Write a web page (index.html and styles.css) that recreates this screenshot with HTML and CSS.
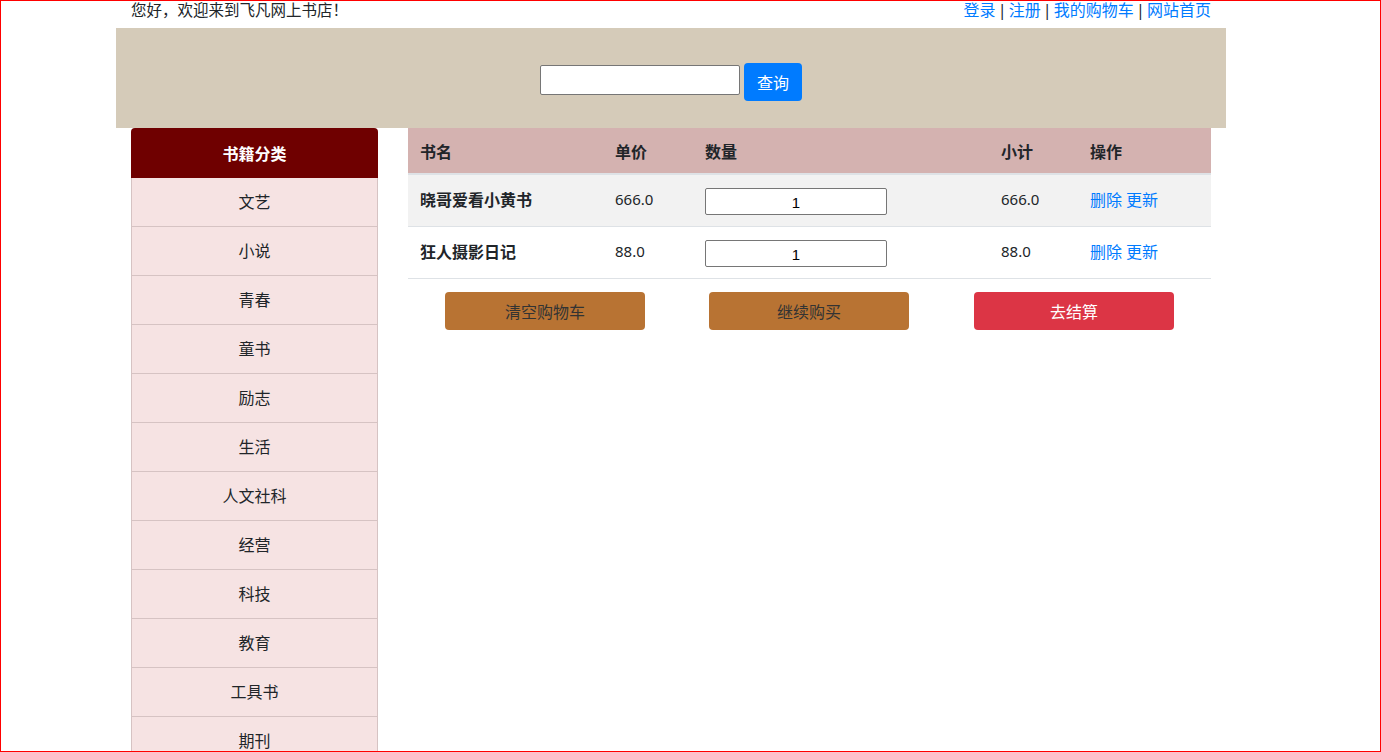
FILE: index.html
```html
<!DOCTYPE html>
<html lang="zh-CN">
<head>
<meta charset="utf-8">
<title>飞凡网上书店 - 购物车</title>
<link rel="stylesheet" href="styles.css">
</head>
<body>
<div class="frame"></div>
<div class="page">
  <div class="topbar">
    <span class="welcome">您好，欢迎来到飞凡网上书店！</span>
    <span class="toplinks"><a href="#">登录</a> | <a href="#">注册</a> | <a href="#">我的购物车</a> | <a href="#">网站首页</a></span>
  </div>
  <div class="band">
    <input class="search-input" type="text">
    <button class="search-btn">查询</button>
  </div>
  <div class="main">
    <div class="sidebar">
      <div class="side-head">书籍分类</div>
      <div class="side-item">文艺</div>
      <div class="side-item">小说</div>
      <div class="side-item">青春</div>
      <div class="side-item">童书</div>
      <div class="side-item">励志</div>
      <div class="side-item">生活</div>
      <div class="side-item">人文社科</div>
      <div class="side-item">经营</div>
      <div class="side-item">科技</div>
      <div class="side-item">教育</div>
      <div class="side-item">工具书</div>
      <div class="side-item">期刊</div>
    </div>
    <div class="content">
      <table class="cart">
        <colgroup>
          <col class="c-name"><col class="c-price"><col class="c-qty"><col class="c-sub"><col class="c-op">
        </colgroup>
        <thead>
          <tr><th>书名</th><th>单价</th><th>数量</th><th>小计</th><th>操作</th></tr>
        </thead>
        <tbody>
          <tr class="odd">
            <td class="bname">晓哥爱看小黄书</td>
            <td>666.0</td>
            <td><input class="qty" type="text" value="1"></td>
            <td>666.0</td>
            <td><a href="#">删除</a> <a href="#">更新</a></td>
          </tr>
          <tr>
            <td class="bname">狂人摄影日记</td>
            <td>88.0</td>
            <td><input class="qty" type="text" value="1"></td>
            <td>88.0</td>
            <td><a href="#">删除</a> <a href="#">更新</a></td>
          </tr>
        </tbody>
      </table>
      <div class="actions">
        <button class="act brown">清空购物车</button>
        <button class="act brown">继续购买</button>
        <button class="act red">去结算</button>
      </div>
    </div>
  </div>
</div>
</body>
</html>
```

FILE: styles.css
```css
html, body {
  margin: 0;
  padding: 0;
}
body {
  font-family: "Noto Sans", "Noto Sans CJK SC", sans-serif;
  font-size: 16px;
  color: #212529;
  background: #fff;
  overflow: hidden;
}
.frame {
  position: fixed;
  top: 0;
  left: 0;
  right: 0;
  bottom: 0;
  border: 1px solid #ff0000;
  pointer-events: none;
  z-index: 10;
}
a {
  color: #007bff;
  text-decoration: none;
}
.page {
  width: 1110px;
  margin-left: 116px;
}
.topbar {
  height: 28px;
  padding: 0 15px;
  display: flex;
  justify-content: space-between;
  align-items: flex-start;
  line-height: 21px;
  font-size: 16px;
}
.welcome {
  font-size: 15.5px;
}
.toplinks {
  word-spacing: -2px;
}
.band {
  height: 100px;
  box-sizing: border-box;
  padding-top: 8px;
  background: #d5cbb9;
  display: flex;
  align-items: center;
  justify-content: center;
  gap: 4px;
}
.search-input {
  width: 200px;
  height: 30px;
  box-sizing: border-box;
  border: 1px solid #767676;
  border-radius: 2px;
  margin: 0 0 4px 0;
  padding: 1px 2px;
  background: #fff;
}
.search-btn {
  width: 58px;
  height: 38px;
  border: none;
  border-radius: 4px;
  background: #007bff;
  color: #fff;
  font-family: inherit;
  font-size: 16px;
  padding: 0;
  margin: 0;
}
.main {
  display: flex;
  align-items: flex-start;
  padding-left: 15px;
  gap: 30px;
}
.sidebar {
  width: 247px;
  flex: none;
}
.side-head {
  height: 50px;
  background: #6f0000;
  color: #fff;
  font-weight: bold;
  border-radius: 4px 4px 0 0;
  display: flex;
  align-items: center;
  justify-content: center;
}
.side-item {
  height: 46px;
  padding-bottom: 2px;
  background: #f6e3e3;
  border: 1px solid #d6c3c3;
  border-top: none;
  box-sizing: content-box;
  display: flex;
  align-items: center;
  justify-content: center;
  width: 245px;
}
.content {
  width: 803px;
  flex: none;
}
.cart {
  width: 803px;
  border-collapse: collapse;
  table-layout: fixed;
}
.c-name { width: 195px; }
.c-price { width: 90px; }
.c-qty { width: 296px; }
.c-sub { width: 89px; }
.c-op { width: 133px; }
.cart th {
  background: #d4b2b0;
  height: 45px;
  padding: 0 12px;
  text-align: left;
  font-weight: bold;
  border-bottom: 2px solid #dee2e6;
  vertical-align: middle;
}
.cart td {
  height: 48px;
  padding: 0 12px 3px 12px;
  border-top: 1px solid #dee2e6;
  vertical-align: middle;
  font-size: 15px;
}
.cart td a {
  font-size: 16px;
}
.cart tbody tr:last-child td {
  border-bottom: 1px solid #dee2e6;
}
.cart tr.odd td {
  background: #f2f2f2;
}
.cart td.bname {
  font-weight: bold;
  font-size: 16px;
}
.qty {
  width: 182px;
  height: 27px;
  box-sizing: border-box;
  border: 1px solid #767676;
  border-radius: 2px;
  text-align: center;
  font-family: "Liberation Sans", sans-serif;
  font-size: 15px;
  color: #000;
  padding: 3px 0 0 0;
  margin: 4px 0 0 0;
  background: #fff;
  vertical-align: middle;
}
.actions {
  display: flex;
  padding-left: 37px;
  gap: 64px;
  margin-top: 13px;
}
.act {
  width: 200px;
  height: 38px;
  border: none;
  border-radius: 4px;
  font-family: inherit;
  font-size: 16px;
  padding: 0;
}
.brown {
  background: #b87333;
  color: #333;
}
.red {
  background: #dc3545;
  color: #fff;
}
.act.red {
  margin-left: 1px;
}
```
